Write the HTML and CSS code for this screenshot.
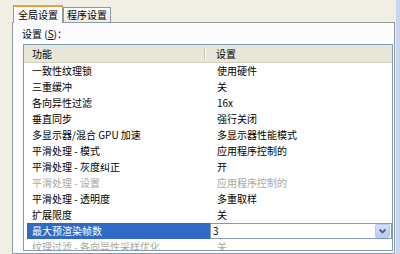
FILE: index.html
```html
<!DOCTYPE html>
<html lang="zh-CN">
<head>
    <meta charset="UTF-8">
    <title>全局设置</title>
    <link rel="stylesheet" href="styles.css">
</head>
<body>
    <div class="screen">
        <div class="tabs">
            <div class="tab active">全局设置</div>
            <div class="tab">程序设置</div>
        </div>
        <div class="panel">
            <div class="caption">设置 (<u>S</u>)：</div>
            <div class="list">
                <div class="head">
                    <div class="c1">功能</div>
                    <div class="c2">设置</div>
                </div>
                <div class="row"><div class="c1">一致性纹理锁</div><div class="c2">使用硬件</div></div>
                <div class="row"><div class="c1">三重缓冲</div><div class="c2">关</div></div>
                <div class="row"><div class="c1">各向异性过滤</div><div class="c2">16x</div></div>
                <div class="row"><div class="c1">垂直同步</div><div class="c2">强行关闭</div></div>
                <div class="row"><div class="c1">多显示器/混合 GPU 加速</div><div class="c2">多显示器性能模式</div></div>
                <div class="row"><div class="c1">平滑处理 - 模式</div><div class="c2">应用程序控制的</div></div>
                <div class="row"><div class="c1">平滑处理 - 灰度纠正</div><div class="c2">开</div></div>
                <div class="row off"><div class="c1">平滑处理 - 设置</div><div class="c2">应用程序控制的</div></div>
                <div class="row"><div class="c1">平滑处理 - 透明度</div><div class="c2">多重取样</div></div>
                <div class="row"><div class="c1">扩展限度</div><div class="c2">关</div></div>
                <div class="row selected">
                    <div class="c1">最大预渲染帧数</div>
                    <div class="c2">
                        <div class="combo">
                            <span class="value">3</span>
                            <span class="drop">
                                <svg width="13" height="12" viewBox="0 0 13 12">
                                    <path d="M3.5 4.5 L6.5 7.5 L9.5 4.5" fill="none" stroke="#4d6185" stroke-width="1.8"/>
                                </svg>
                            </span>
                        </div>
                    </div>
                </div>
                <div class="row off"><div class="c1">纹理过滤 - 各向异性采样优化</div><div class="c2">关</div></div>
            </div>
        </div>
    </div>
</body>
</html>
```

FILE: styles.css
```css
body {
    margin: 0;
    background: #f1efe3;
    font-family: "Noto Sans CJK SC", sans-serif;
    font-size: 10px;
    color: #000;
}
.screen {
    width: 400px;
    height: 254px;
    overflow: hidden;
    box-sizing: border-box;
    border-right: 4px solid #c9d6ef;
    display: flex;
    flex-direction: column;
}

/* 탭 */
.tabs {
    height: 22px;
    padding-left: 13px;
    display: flex;
    align-items: flex-end;
    flex-shrink: 0;
}
.tab {
    height: 14px;
    line-height: 14px;
    padding: 0 3px;
    border: 1px solid #919b9c;
    border-bottom: none;
    background: linear-gradient(#ffffff, #ecebe5);
    white-space: nowrap;
}
.tab.active {
    height: 16px;
    line-height: 16px;
    padding: 0 4px;
    border-top: 2px solid #e8a33c;
    background: #fcfcfe;
    margin-bottom: -1px;
    position: relative;
    z-index: 1;
}

/* 패널 */
.panel {
    flex: 1;
    margin: 0 1px 0 12px;
    padding: 4px 1px 0 9px;
    border: 1px solid #919b9c;
    background: #fcfcfe;
}
.caption {
    height: 14px;
    line-height: 14px;
    margin-bottom: 3px;
}
.list {
    margin-left: 1px;
    height: 207px;
    box-sizing: border-box;
    border: 1px solid #7f9db9;
    background: #fff;
    overflow: hidden;
}
.head {
    display: flex;
    height: 17px;
    line-height: 17px;
    background: #e8e6d6;
    border-bottom: 1px solid #d2cfbd;
}
.head .c1 {
    width: 181px;
    box-sizing: border-box;
    padding-left: 8px;
    position: relative;
}
.head .c1::after {
    content: "";
    position: absolute;
    right: 0;
    top: 3px;
    height: 11px;
    width: 1px;
    background: #c2bfab;
    box-shadow: 1px 0 0 #fff;
}
.head .c2 {
    flex: 1;
    padding-left: 11px;
}
.row {
    display: flex;
    height: 16px;
    line-height: 16px;
    margin-left: 3px;
}
.row .c1 {
    width: 183px;
    box-sizing: border-box;
    padding-left: 5px;
    white-space: pre;
}
.row .c2 {
    flex: 1;
    padding-left: 7px;
}
.row.off {
    color: #aca899;
}
.row.selected .c1 {
    background: #316ac5;
    color: #fff;
}
.row.selected .c2 {
    padding-left: 0;
}
.combo {
    height: 16px;
    box-sizing: border-box;
    border: 1px solid #7f9db9;
    display: flex;
    align-items: center;
    justify-content: space-between;
    background: #fff;
}
.combo .value {
    padding-left: 2px;
    line-height: 14px;
}
.drop {
    width: 13px;
    height: 12px;
    margin-right: 1px;
    border: 1px solid #b6c9f3;
    border-radius: 2px;
    background: linear-gradient(#d5e0fb, #b7caf5);
    display: flex;
}
```
